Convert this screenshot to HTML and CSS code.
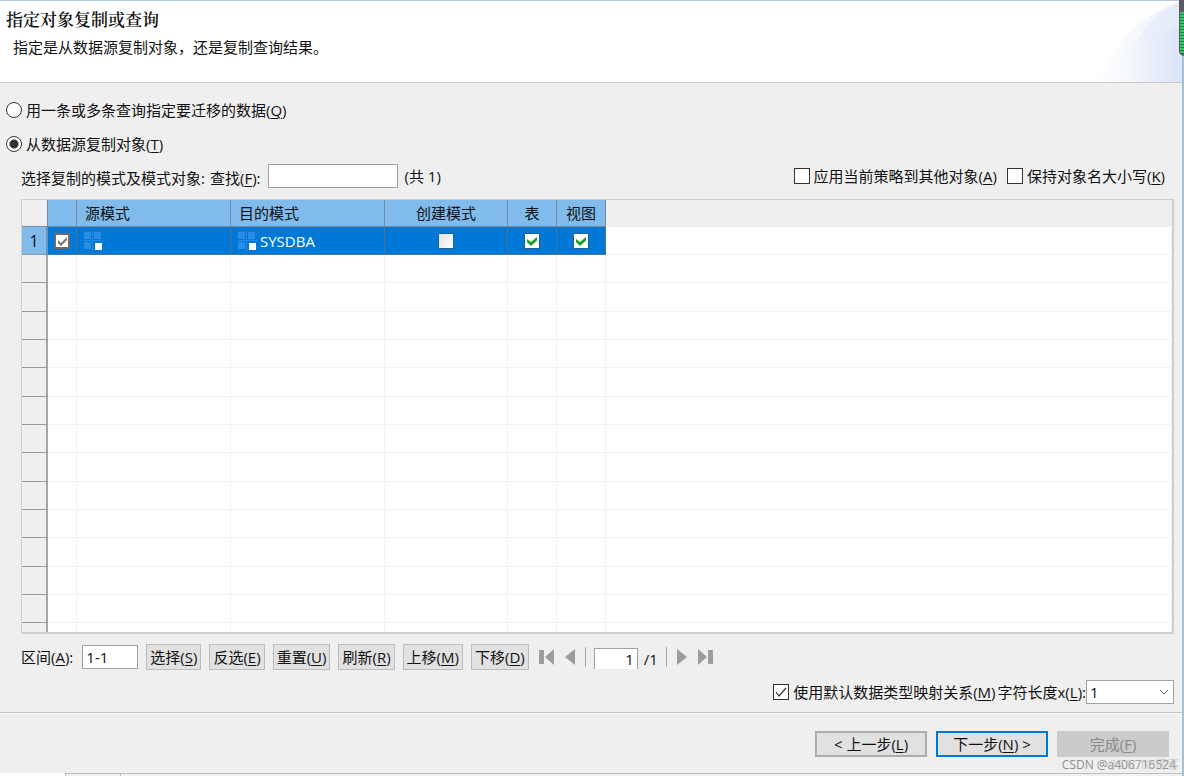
FILE: index.html
```html
<!DOCTYPE html>
<html lang="zh-CN">
<head>
<meta charset="utf-8">
<title>指定对象复制或查询</title>
<link rel="stylesheet" href="styles.css">
</head>
<body>
<div class="wizard">
  <header class="banner">
    <div class="banner-text">
      <h1 class="title">指定对象复制或查询</h1>
      <p class="subtitle">指定是从数据源复制对象，还是复制查询结果。</p>
    </div>
    <svg class="banner-art" viewBox="0 0 98 81" aria-hidden="true">
      <defs>
        <linearGradient id="g1" x1="0" x2="1"><stop offset="0" stop-color="#fff"/><stop offset="1" stop-color="#e9effa"/></linearGradient>
        <linearGradient id="g2" x1="0" x2="1"><stop offset="0" stop-color="#fff"/><stop offset=".3" stop-color="#f7f9fd"/><stop offset="1" stop-color="#dbe3f6"/></linearGradient>
      </defs>
      <path d="M12 81C28 48 56 10 98 1V81Z" fill="url(#g1)"/>
      <path d="M54 40C64 20 80 6 98 1V40Z" fill="#dbe5f6" opacity=".35"/>
      <path d="M12 81C34 52 60 34 98 26V81Z" fill="url(#g2)"/>
    </svg>
    <div class="meter"></div>
  </header>

  <main class="content">
    <label class="choice"><input class="radio" type="radio" name="mode"><span>用一条或多条查询指定要迁移的数据(<u>Q</u>)</span></label>
    <label class="choice"><input class="radio" type="radio" name="mode" checked><span>从数据源复制对象(<u>T</u>)</span></label>

    <section class="panel">
      <div class="filter">
        <span class="filter-label">选择复制的模式及模式对象:</span>
        <label class="filter-label find-label" for="find">查找(<u>F</u>):</label>
        <input class="field find" id="find" type="text">
        <span class="total">(共 1)</span>
        <div class="options">
          <label class="option"><input class="check" type="checkbox"><span>应用当前策略到其他对象(<u>A</u>)</span></label>
          <label class="option"><input class="check" type="checkbox"><span>保持对象名大小写(<u>K</u>)</span></label>
        </div>
      </div>

      <div class="grid-frame">
        <table class="grid">
          <colgroup><col class="c-num"><col class="c-check"><col class="c-name"><col class="c-name"><col class="c-create"><col class="c-flag"><col class="c-flag"><col></colgroup>
          <thead>
            <tr><th class="corner"></th><th></th><th class="left">源模式</th><th class="left">目的模式</th><th>创建模式</th><th>表</th><th>视图</th><th class="rest"></th></tr>
          </thead>
          <tbody>
            <tr class="selected">
              <th scope="row">1</th>
              <td><input class="cell-check gray" type="checkbox" checked aria-label="选择行"></td>
              <td><span class="schema"><svg class="schema-icon" viewBox="0 0 20 20" aria-hidden="true"><path d="M1 1h7v7H1zM11 1h7v7h-7zM1 11h7v7H1z" fill="#2a8ce2"/><path d="M0 9.500H20M9.500 0V20" stroke="#2589df"/><path d="M12 12h7v7h-7z" fill="#fff"/></svg></span></td>
              <td><span class="schema"><svg class="schema-icon" viewBox="0 0 20 20" aria-hidden="true"><path d="M1 1h7v7H1zM11 1h7v7h-7zM1 11h7v7H1z" fill="#2a8ce2"/><path d="M0 9.500H20M9.500 0V20" stroke="#2589df"/><path d="M12 12h7v7h-7z" fill="#fff"/></svg><span>SYSDBA</span></span></td>
              <td><input class="cell-check" type="checkbox" aria-label="创建模式"></td>
              <td><input class="cell-check" type="checkbox" checked aria-label="表"></td>
              <td><input class="cell-check" type="checkbox" checked aria-label="视图"></td>
              <td class="rest"></td>
            </tr>
            <tr><th></th><td></td><td></td><td></td><td></td><td></td><td></td><td></td></tr>
            <tr><th></th><td></td><td></td><td></td><td></td><td></td><td></td><td></td></tr>
            <tr><th></th><td></td><td></td><td></td><td></td><td></td><td></td><td></td></tr>
            <tr><th></th><td></td><td></td><td></td><td></td><td></td><td></td><td></td></tr>
            <tr><th></th><td></td><td></td><td></td><td></td><td></td><td></td><td></td></tr>
            <tr><th></th><td></td><td></td><td></td><td></td><td></td><td></td><td></td></tr>
            <tr><th></th><td></td><td></td><td></td><td></td><td></td><td></td><td></td></tr>
            <tr><th></th><td></td><td></td><td></td><td></td><td></td><td></td><td></td></tr>
            <tr><th></th><td></td><td></td><td></td><td></td><td></td><td></td><td></td></tr>
            <tr><th></th><td></td><td></td><td></td><td></td><td></td><td></td><td></td></tr>
            <tr><th></th><td></td><td></td><td></td><td></td><td></td><td></td><td></td></tr>
            <tr><th></th><td></td><td></td><td></td><td></td><td></td><td></td><td></td></tr>
            <tr><th></th><td></td><td></td><td></td><td></td><td></td><td></td><td></td></tr>
            <tr class="partial"><th></th><td></td><td></td><td></td><td></td><td></td><td></td><td></td></tr>
          </tbody>
        </table>
      </div>

      <div class="tools">
        <label for="range">区间(<u>A</u>):</label>
        <input class="field range" id="range" type="text" value="1-1">
        <div class="tool-buttons">
          <button class="tool" type="button">选择(<u>S</u>)</button>
          <button class="tool" type="button">反选(<u>E</u>)</button>
          <button class="tool" type="button">重置(<u>U</u>)</button>
          <button class="tool" type="button">刷新(<u>R</u>)</button>
          <button class="tool" type="button">上移(<u>M</u>)</button>
          <button class="tool" type="button">下移(<u>D</u>)</button>
        </div>
        <nav class="pager" aria-label="分页">
          <button class="nav" type="button" aria-label="首页"><svg width="16" height="16" viewBox="0 0 16 16"><path d="M0 1h5v14H0zM15 0v16L6 8z" fill="#9b9c9c"/></svg></button>
          <button class="nav" type="button" aria-label="上一页"><svg width="10" height="16" viewBox="0 0 10 16"><path d="M10 0v16L0 8z" fill="#9b9c9c"/></svg></button>
          <span class="divider"></span>
          <input class="field page" type="text" value="1" aria-label="页码">
          <span class="pages">/1</span>
          <span class="divider"></span>
          <button class="nav" type="button" aria-label="下一页"><svg width="10" height="16" viewBox="0 0 10 16"><path d="M0 0v16l10-8z" fill="#9b9c9c"/></svg></button>
          <button class="nav" type="button" aria-label="末页"><svg width="16" height="16" viewBox="0 0 16 16"><path d="M1 0v16l9-8zM11 1h5v14h-5z" fill="#9b9c9c"/></svg></button>
        </nav>
      </div>

      <div class="mapping">
        <label class="option"><input class="check" type="checkbox" checked><span>使用默认数据类型映射关系(<u>M</u>)</span></label>
        <label class="factor-label" for="factor">字符长度x(<u>L</u>):</label>
        <select class="factor" id="factor"><option>1</option></select>
      </div>
    </section>
  </main>

  <footer class="footer">
    <button class="step" type="button">&lt; 上一步(<u>L</u>)</button>
    <button class="step primary" type="button">下一步(<u>N</u>) &gt;</button>
    <button class="step" type="button" disabled>完成(<u>F</u>)</button>
  </footer>
  <div class="taskbar"><span></span><span></span><span></span></div>
  <div class="watermark">CSDN @a406716524</div>
  <div class="watermark faint">@51CTO博客</div>
</div>
</body>
</html>
```
FILE: styles.css
```css
* { box-sizing: border-box; }
body {
  margin: 0;
  background: #efefef;
  color: #111;
  font: 15px/20px "Open Sans", "Noto Sans CJK SC", sans-serif;
}
input, button, select { font: inherit; color: inherit; margin: 0; }
u { text-underline-offset: 2px; text-decoration-thickness: 1px; }
.wizard {
  position: relative;
  display: flex;
  flex-direction: column;
  min-height: 100vh;
  border-top: 1px solid #b9cae0;
  border-right: 2px solid #a9bdd6;
}
.banner {
  position: relative;
  display: flex;
  justify-content: space-between;
  height: 82px;
  background: #fff;
  border-bottom: 1px solid #c9c9cb;
}
.banner-text { padding: 8px 6px; }
.title {
  margin: 0 0 8px;
  font: 600 17px/20px "Noto Serif CJK SC", "Noto Sans CJK SC", serif;
}
.subtitle { margin: 0; padding-left: 7px; }
.banner-art { width: 98px; height: 81px; }
.meter {
  position: absolute;
  top: -1px;
  right: -2px;
  width: 5px;
  height: 56px;
  border: solid #5b5965;
  border-width: 12px 0 2px 1px;
  border-radius: 0 0 0 5px;
  background: repeating-linear-gradient(#2fca65 0 2px, #26794a 2px 3px);
}
.content { flex: 1; padding: 17px 8px 0 6px; }
.choice { display: flex; align-items: center; gap: 4px; width: max-content; height: 20px; margin-bottom: 14px; }
.radio, .check, .cell-check { appearance: none; flex: none; background: #fff; }
.radio { width: 16px; height: 16px; border: 1px solid #333; border-radius: 50%; }
.radio:checked { background: radial-gradient(circle, #333 0 4px, #fff 5px); }
.check { width: 16px; height: 16px; border: 1px solid #333; }
.check:checked {
  background: #fff url("data:image/svg+xml,%3Csvg xmlns='http://www.w3.org/2000/svg' viewBox='0 0 14 14'%3E%3Cpath d='M2 7l3 4 7-8' fill='none' stroke='%23333' stroke-width='1.200'/%3E%3C/svg%3E") center / 14px;
}
.panel { padding-left: 15px; }
.filter { display: flex; align-items: center; height: 24px; margin-top: -4px; }
.filter-label { padding-top: 4px; }
.find-label { margin-left: 5px; }
.field { border: 1px solid #a0a0a0; background: #fff; border-radius: 0; padding: 0 3px; height: 24px; }
.find { width: 130px; margin-left: 7px; }
.total { margin-left: 7px; }
.options { display: flex; gap: 10px; margin-left: auto; margin-right: 9px; }
.option { display: flex; align-items: center; gap: 4px; }
.grid-frame {
  margin-top: 11px;
  border: 1px solid #cfcfd2;
  border-width: 1px 2px 2px 1px;
  background: #fff;
}
.grid { width: 100%; table-layout: fixed; border-collapse: separate; border-spacing: 0; }
.c-num { width: 26px; }
.c-check { width: 29px; }
.c-name { width: 154px; }
.c-create { width: 123px; }
.c-flag { width: 49px; }
.grid th, .grid td { padding: 0; text-align: center; vertical-align: middle; font-weight: 400; height: 28px; }
.grid tbody tr:nth-child(3n) > * { height: 29px; }
.grid thead th { height: 27px; background: #80bbeb; border-right: 1px solid #6f8ba3; border-bottom: 1px solid #7d8d9c; }
.grid thead .left { text-align: left; padding-left: 8px; }
.grid thead .corner { background: #efefef; }
.grid thead .rest { background: #efefef; border-color: #efefef; }
.grid td { border-right: 1px solid #f1f1f1; border-bottom: 1px solid #f1f1f1; }
.grid tbody th { background: #efefef; border-right: 2px solid #a5a5a5; border-bottom: 1px solid #999; }
.grid .selected th { background: #80bbeb; border-right-color: #6c94b9; font-size: 16px; }
.grid .selected td { background: #0078d7; border-color: #4f7290; color: #fff; }
.grid .selected .rest { background: #fff; border-color: #f1f1f1; }
.grid tbody tr.partial:last-child > * { height: 9px; border-bottom: 0; }
.cell-check {
  display: block;
  width: 16px;
  height: 16px;
  margin: 0 auto;
  border: 1px solid #245f96;
  background: linear-gradient(135deg, #e2e2e2, #fff);
}
.cell-check:checked {
  background: #fff url("data:image/svg+xml,%3Csvg xmlns='http://www.w3.org/2000/svg' viewBox='0 0 14 14'%3E%3Cpath d='M2 5l4 3 6-5v3.500l-6 5.500-4-4z' fill='%2318a022'/%3E%3C/svg%3E") center / 14px;
}
.cell-check.gray:checked {
  border: 2px solid #706b67;
  background: #fff url("data:image/svg+xml,%3Csvg xmlns='http://www.w3.org/2000/svg' viewBox='0 0 12 12'%3E%3Cpath d='M2 5l3 3 6-6v3l-6 6-3-3z' fill='%23777'/%3E%3C/svg%3E") center / 12px;
}
.schema { display: flex; align-items: center; gap: 3px; padding-left: 6px; }
.schema-icon { width: 20px; height: 20px; }
.tools { display: flex; align-items: center; height: 26px; margin-top: 10px; }
.range { width: 56px; margin-left: 9px; }
.tool-buttons { display: flex; gap: 8px; margin-left: 8px; }
.tool { height: 26px; padding: 0 3px; border: 1px solid #bcbcbc; background: #e1e1e1; white-space: nowrap; }
.pager { display: flex; align-items: center; margin-left: 10px; }
.nav { display: flex; padding: 0; border: 0; background: none; margin-right: 10px; }
.divider { width: 1px; height: 20px; background: #a8a8a8; }
.page { width: 44px; height: 21px; margin: 3px 6px 0 8px; border-bottom: 0; text-align: right; }
.pages { margin: 4px 8px 0 0; }
.divider + .nav { margin-left: 10px; }
.mapping { display: flex; align-items: center; justify-content: flex-end; height: 24px; margin-top: 10px; }
.factor-label { margin-left: 2px; }
.factor {
  appearance: none;
  width: 88px;
  height: 24px;
  padding: 0 3px;
  border: 1px solid #a0a0a0;
  border-radius: 0;
  background: #fff url("data:image/svg+xml,%3Csvg xmlns='http://www.w3.org/2000/svg' viewBox='0 0 10 6'%3E%3Cpath d='M1 1l4 4 4-4' fill='none' stroke='%23555'/%3E%3C/svg%3E") right 4px center / 10px 6px no-repeat;
}
.footer {
  display: flex;
  justify-content: flex-end;
  gap: 9px;
  height: 61px;
  padding: 18px 13px 0;
  border-top: 1px solid #c3c3c3;
  box-shadow: inset 0 1px #f9f9f9;
}
.step { width: 112px; height: 26px; padding: 0; border: 2px solid #adadad; background: #e1e1e1; }
.step.primary { border-color: #0078d7; }
.step:disabled { border-color: #cbcbcb; background: #cbcbcb; color: #888; }
.taskbar { display: grid; grid-template-columns: 65px 55px 1fr; height: 3px; background: #fff; }
.taskbar span + span { border-top: 1px solid #bdbdbd; border-left: 1px solid #bdbdbd; background: #f1f1f1; }
.watermark { position: absolute; right: 6px; bottom: 3px; color: #8e8e8e; font-size: 12px; line-height: 16px; }
.faint { right: 3px; color: #b9b9b9; opacity: .6; }
```
